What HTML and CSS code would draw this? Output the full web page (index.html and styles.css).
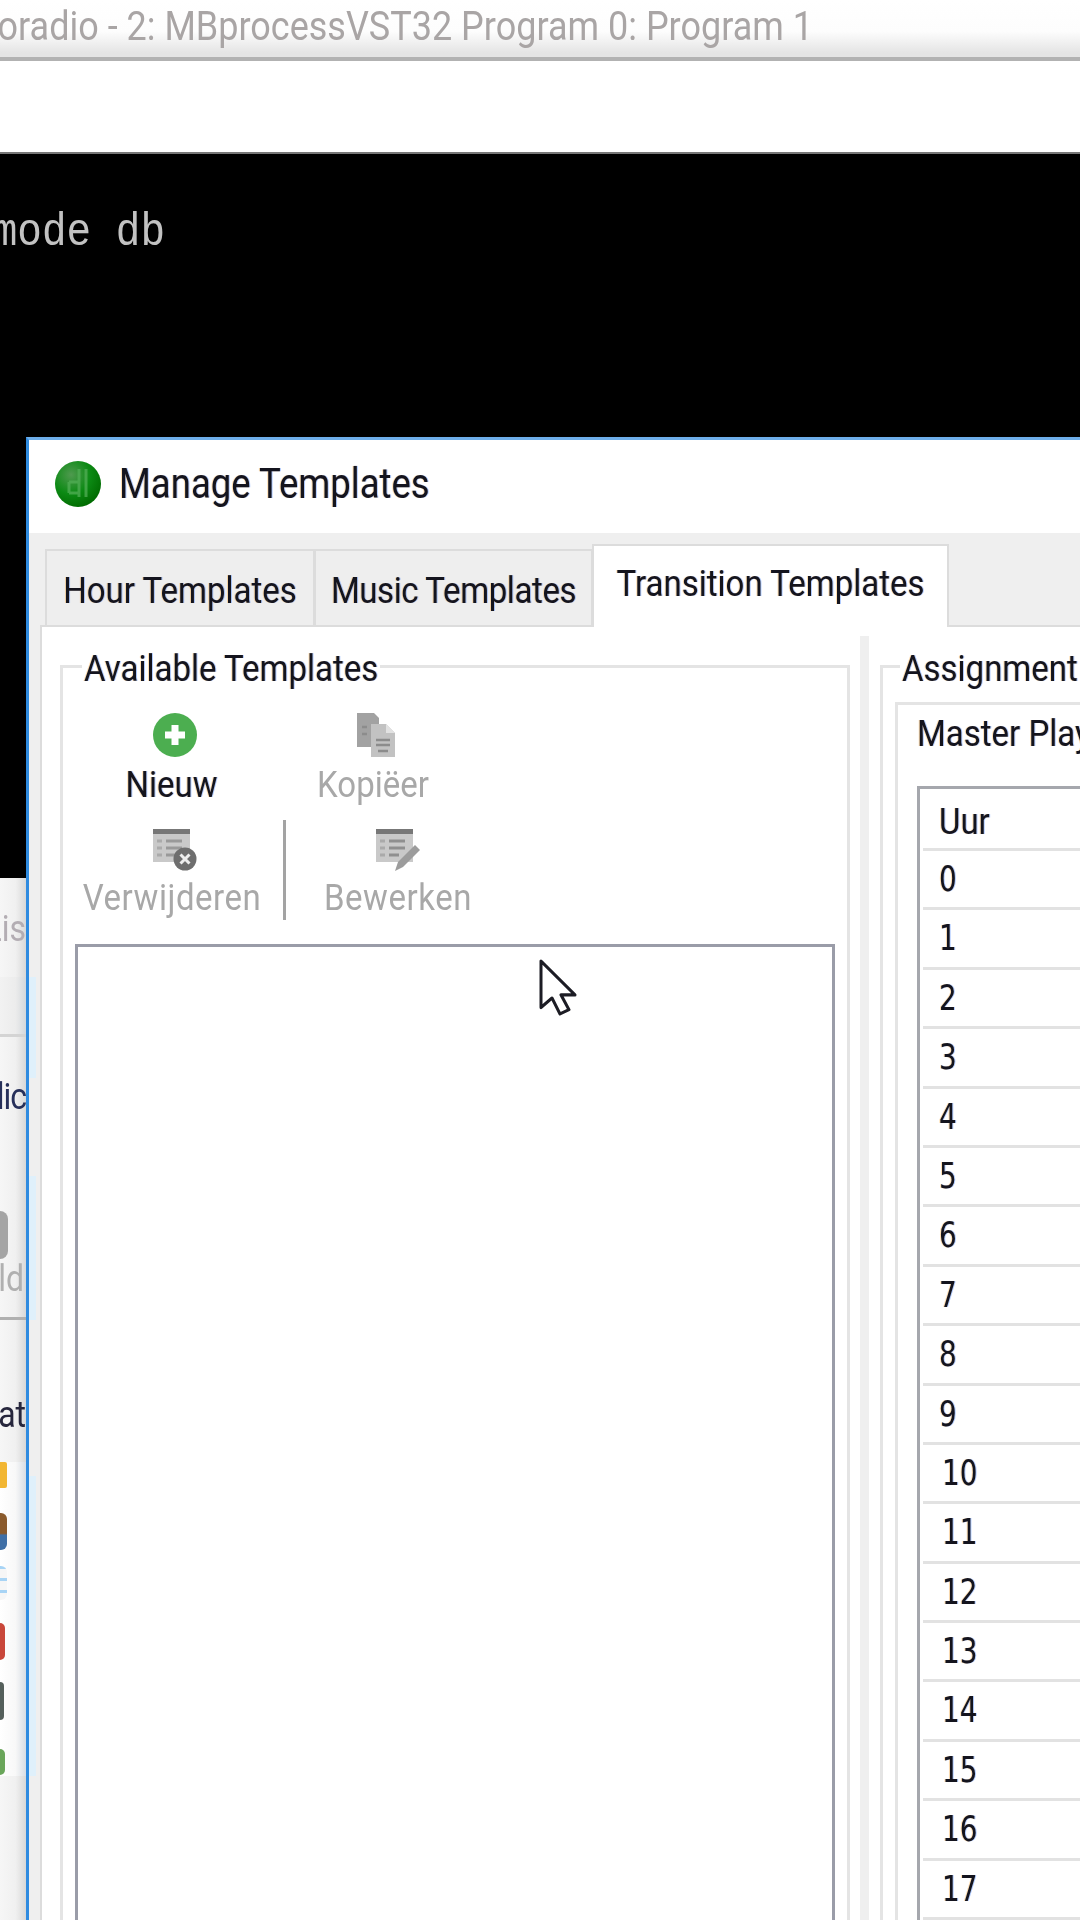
FILE: index.html
```html
<!DOCTYPE html>
<html lang="nl">
<head>
<meta charset="utf-8">
<title>Manage Templates</title>
<link rel="stylesheet" href="styles.css">
</head>
<body>
<div class="screen">
  <header class="apptitle"><span class="tx apptitle-text">oradio - 2: MBprocessVST32 Program 0: Program 1</span></header>
  <div class="menuband"></div>
  <main class="console">
    <div class="console-line"><span class="tx">mode db</span></div>
  </main>

  <aside class="backwin">
    <div class="bw-row bw-lis"><span class="tx">Lis</span></div>
    <div class="bw-logo"></div>
    <div class="bw-row bw-lic"><span class="tx">lic</span></div>
    <div class="bw-tool">
      <div class="bw-blob"></div>
      <div class="bw-ld"><span class="tx">ld</span></div>
    </div>
    <div class="bw-row bw-at"><span class="tx">at</span></div>
    <div class="bw-icons">
      <i class="bi yellow"></i>
      <i class="bi brown"></i>
      <i class="bi lines"></i>
      <i class="bi red"></i>
      <i class="bi dark"></i>
      <i class="bi green"></i>
    </div>
  </aside>

  <section class="dialog">
    <div class="edge">
      <i class="e2"></i><i class="e3"></i><i class="e4"></i>
    </div>
    <div class="dlg-title">
      <svg class="app-icon" viewBox="0 0 46 46">
        <defs>
          <radialGradient id="ball" cx="35%" cy="30%" r="75%">
            <stop offset="0" stop-color="#4f9a4f"/>
            <stop offset=".55" stop-color="#0c8a14"/>
            <stop offset="1" stop-color="#006a00"/>
          </radialGradient>
        </defs>
        <circle cx="23" cy="23" r="23" fill="url(#ball)"/>
        <path d="M31 8v28M24 8v28M14 21h10M14 32h10M14 21v11" fill="none" stroke="#52ad55" stroke-width="3" opacity=".75"/>
      </svg>
      <span class="tx dlg-title-text">Manage Templates</span>
    </div>

    <nav class="tabs">
      <div class="tab tab-hour"><span class="tx">Hour Templates</span></div>
      <div class="tab tab-music"><span class="tx">Music Templates</span></div>
      <div class="tab tab-active"><span class="tx">Transition Templates</span></div>
    </nav>

    <div class="panel">
      <section class="group group-left">
        <div class="legend"><span class="tx">Available Templates</span></div>
        <div class="toolbar">
          <div class="tool tool-new">
            <svg class="ic" viewBox="0 0 44 44"><circle cx="22" cy="22" r="22" fill="#4cae50"/><path d="M22 12v20M12 22h20" stroke="#fff" stroke-width="7"/></svg>
            <span class="tx lbl">Nieuw</span>
          </div>
          <div class="tool tool-copy off">
            <svg class="ic" viewBox="0 0 38 44"><path d="M0 0h17l5 5v29H0z" fill="#a2a2a2"/><path d="M14 11h15l9 9v24H14z" fill="#c2c2c2"/><path d="M29 11l9 9h-9z" fill="#e2e2e2"/><path d="M19 27h14M19 32h14M21 38h10M5 14h5M5 21h5" stroke="#8c8c8c" stroke-width="2.5"/></svg>
            <span class="tx lbl">Kopiëer</span>
          </div>
          <div class="tool tool-del off">
            <svg class="ic" viewBox="0 0 44 42"><path d="M0 3h37v30H0z" fill="#c9c9c9"/><path d="M0 0h37v5H0z" fill="#777"/><path d="M13 12h16M13 19h16M13 26h10" stroke="#999" stroke-width="3"/><path d="M4 12h5M4 19h5M4 26h5" stroke="#aaa" stroke-width="3"/><circle cx="32" cy="30" r="11.500" fill="#6e6e6e"/><path d="M27.500 25.500l9 9M36.500 25.500l-9 9" stroke="#eee" stroke-width="3"/></svg>
            <span class="tx lbl">Verwijderen</span>
          </div>
          <div class="tool-sep"></div>
          <div class="tool tool-edit off">
            <svg class="ic" viewBox="0 0 44 42"><path d="M0 3h37v30H0z" fill="#c9c9c9"/><path d="M0 0h37v5H0z" fill="#777"/><path d="M13 12h16M13 19h16M13 26h10" stroke="#8f8f8f" stroke-width="3"/><path d="M4 12h5M4 19h5M4 26h5" stroke="#aaa" stroke-width="3"/><path d="M19 42l3-9 17-17 5 5-17 17z" fill="#9c9c9c"/></svg>
            <span class="tx lbl">Bewerken</span>
          </div>
        </div>
        <div class="listbox"></div>
      </section>

      <div class="splitter"></div>

      <section class="group group-right">
        <div class="legend"><span class="tx">Assignment</span></div>
        <div class="subpage">
          <div class="subtitle"><span class="tx">Master Play</span></div>
          <div class="hours">
            <div class="hr hr-head"><span class="tx">Uur</span></div>
            <div class="hr"><span class="tx num">0</span></div>
            <div class="hr"><span class="tx num">1</span></div>
            <div class="hr"><span class="tx num">2</span></div>
            <div class="hr"><span class="tx num">3</span></div>
            <div class="hr"><span class="tx num">4</span></div>
            <div class="hr"><span class="tx num">5</span></div>
            <div class="hr"><span class="tx num">6</span></div>
            <div class="hr"><span class="tx num">7</span></div>
            <div class="hr"><span class="tx num">8</span></div>
            <div class="hr"><span class="tx num">9</span></div>
            <div class="hr two"><span class="tx num">10</span></div>
            <div class="hr two"><span class="tx num">11</span></div>
            <div class="hr two"><span class="tx num">12</span></div>
            <div class="hr two"><span class="tx num">13</span></div>
            <div class="hr two"><span class="tx num">14</span></div>
            <div class="hr two"><span class="tx num">15</span></div>
            <div class="hr two"><span class="tx num">16</span></div>
            <div class="hr two"><span class="tx num">17</span></div>
          </div>
        </div>
      </section>
    </div>
  </section>

  <svg class="cursor" viewBox="0 0 38 54" preserveAspectRatio="none"><path d="M2 2v44l11-9 8 15 9-4-8-14h14z" fill="#fff" stroke="#1c1c24" stroke-width="3" stroke-linejoin="round"/></svg>
</div>
</body>
</html>
```

FILE: styles.css
```css
* { box-sizing: border-box; }
html, body { margin: 0; padding: 0; }
body { background: #fff; font-family: Roboto, "Noto Sans", sans-serif; }

.screen {
  position: relative;
  width: 1080px;
  height: 1920px;
  overflow: hidden;
  display: flex;
  flex-direction: column;
  background: #fff;
  filter: blur(0.7px);
}

.tx { display: inline-block; transform: scaleY(1.14); white-space: nowrap; }

.apptitle {
  flex: none;
  height: 61px;
  width: 100%;
  padding: 0 267px 6px 0;
  display: flex;
  justify-content: flex-end;
  align-items: center;
  font-size: 36px;
  line-height: 50px;
  color: #a9a5a5;
  white-space: nowrap;
  background: linear-gradient(#ffffff 0, #fdfdfd 55%, #e4e4e4 93%, #e4e4e4 94%);
  border-bottom: 4px solid #b2b2b2;
}
.menuband { flex: none; height: 93px; background: #fff; border-bottom: 2px solid #777; }

.console { flex: 1; background: #000; padding-top: 53px; }
.console-line {
  width: 165px;
  display: flex;
  justify-content: flex-end;
  font-family: "Liberation Mono", monospace;
  font-size: 41px;
  line-height: 50px;
  color: #c2c2c2;
  white-space: nowrap;
}

/* window partly hidden behind the dialog */
.backwin {
  position: absolute;
  left: 0;
  top: 878px;
  width: 26px;
  height: 1042px;
  overflow: hidden;
  display: flex;
  flex-direction: column;
  background: linear-gradient(90deg, #f6f6f6, #f0f0f0 60%, #d8d8d8);
  font-size: 32px;
}
.bw-row { flex: none; display: flex; justify-content: flex-end; white-space: nowrap; }
.bw-lis { height: 99px; padding-top: 30px; line-height: 44px; color: #b3adb3; }
.bw-logo {
  flex: none;
  height: 60px;
  background: linear-gradient(90deg, #f2f2f2, #ececec 60%, #d4d8dc);
  border-bottom: 3px solid #d4d4d4;
}
.bw-lic { height: 140px; padding-top: 43px; line-height: 40px; color: #27305a; letter-spacing: -1px; }
.bw-tool {
  flex: none;
  height: 143px;
  padding-top: 34px;
  border-bottom: 3px solid #b0b0b0;
}
.bw-blob { width: 8px; height: 48px; background: #a4a4a4; border-radius: 0 8px 8px 0; }
.bw-ld { display: flex; justify-content: flex-end; width: 24px; margin-top: 2px; line-height: 34px; color: #b0b0b0; overflow: hidden; }
.bw-at { height: 142px; padding-top: 82px; line-height: 30px; color: #26263c; }
.bw-icons {
  flex: none;
  display: flex;
  flex-direction: column;
  background: linear-gradient(90deg, #fff, #f8f8f8 60%, #d8dde4);
  height: 314px;
}
.bi { display: block; flex: none; width: 7px; border-radius: 0 6px 6px 0; }
.yellow { height: 26px; background: #f2b632; margin-bottom: 25px; border-radius: 0 2px 2px 0; }
.brown { height: 37px; background: linear-gradient(#8a5a2c 55%, #3f6fa6 60%); margin-bottom: 16px; }
.lines { height: 34px; background: repeating-linear-gradient(#a8d4f5 0 3px, #f6f6f6 3px 12px); margin-bottom: 23px; }
.red { height: 37px; width: 5px; background: #c9473a; margin-bottom: 22px; }
.dark { height: 38px; width: 4px; background: #55605c; margin-bottom: 29px; }
.green { height: 26px; width: 5px; background: #6aa65a; }

/* dialog */
.dialog {
  position: absolute;
  left: 26px;
  top: 437px;
  width: 1054px;
  height: 1483px;
  overflow: hidden;
  display: flex;
  flex-direction: column;
  background: #efefef;
  border-left: 3px solid #2f8be0;
  border-top: 3px solid #6eaeea;
  color: #14141e;
  font-size: 33px;
  text-shadow: -1px 0 rgba(255, 150, 0, .3), 1px 0 rgba(0, 90, 255, .3);
}
.edge {
  position: absolute;
  left: -3px;
  top: 537px;
  width: 10px;
  display: flex;
  flex-direction: column;
}
.edge i { display: block; flex: none; }
.e2 { height: 101px; background: linear-gradient(90deg, #7d8a96 0 3px, #dff0fb 3px); margin-bottom: 98px; }
.e3 { height: 144px; background: linear-gradient(90deg, #7d8a96 0 3px, #dff0fb 3px); margin-bottom: 156px; }
.e4 { height: 300px; background: linear-gradient(90deg, transparent 0 3px, #dff0fb 3px); }
.dlg-title {
  flex: none;
  height: 93px;
  padding-left: 26px;
  background: #fff;
  display: flex;
  align-items: center;
  gap: 18px;
  font-size: 36.500px;
}
.app-icon { width: 46px; height: 46px; flex: none; margin-top: -6px; }
.dlg-title-text { margin-top: -6px; }

.tabs {
  flex: none;
  height: 92px;
  padding-left: 16px;
  display: flex;
  align-items: flex-end;
}
.tab {
  height: 76px;
  border: 2px solid #dcdcdc;
  border-bottom: 0;
  display: flex;
  align-items: center;
  justify-content: center;
  margin-right: -1px;
  background: #eeeeee;
  padding-top: 2px;
}
.tab-hour { width: 270px; }
.tab-music { width: 279px; letter-spacing: -.4px; }
.tab-active {
  width: 357px;
  height: 83px;
  background: #fff;
  padding-top: 0;
  margin-bottom: -2px;
  position: relative;
  padding-bottom: 8px;
}
.panel {
  flex: 1;
  margin-left: 11px;
  min-height: 0;
  background: #fff;
  border-top: 2px solid #dcdcdc;
  border-left: 2px solid #dcdcdc;
  padding: 38px 0 0 18px;
  display: flex;
}
.group {
  flex: none;
  border: 3px solid #e4e4e4;
  border-bottom: 0;
}
.group-left { width: 790px; height: 1300px; }
.group-right { width: 260px; height: 1300px; border-right: 0; }
.legend {
  height: 36px;
  margin-top: -24px;
  margin-left: 19px;
  line-height: 48px;
  width: max-content;
  background: #fff;
  padding: 0 2px;
}
.group-right .legend { margin-left: 17px; }
.splitter { flex: none; width: 9px; margin: -29px 11px 0 10px; background: #efefef; }

.toolbar {
  position: relative;
  height: 264px;
}
.tool {
  position: absolute;
  display: flex;
  flex-direction: column;
  align-items: center;
  width: 200px;
}
.ic { display: block; flex: none; width: 44px; height: 44px; }
.tool-new { left: 12px; top: 33px; }
.tool-copy { left: 210px; top: 33px; }
.tool-del { left: 12px; top: 148px; }
.tool-edit { left: 235px; top: 148px; }
.tool-sep { position: absolute; left: 220px; top: 140px; width: 3px; height: 100px; background: #a3a3a3; }
.tool-copy .ic { width: 38px; margin-left: 6px; }
.lbl { margin-top: 7px; line-height: 40px; }
.tool-new .lbl { margin-right: 7px; }
.tool-del .lbl { margin: 5px 6px 0 0; letter-spacing: .55px; }
.tool-edit .lbl { margin-top: 5px; letter-spacing: .55px; }
.off { color: #a8a8a8; text-shadow: none; }

.listbox {
  margin: 0 12px;
  height: 1100px;
  background: #fff;
  border: 3px solid #9a9ca8;
  border-bottom: 0;
}

.subpage {
  margin: 22px 0 0 12px;
  padding: 10px 0 0 19px;
  border: 3px solid #e4e4e4;
  border-right: 0;
  border-bottom: 0;
  height: 1300px;
}
.subtitle { height: 71px; line-height: 36px; }
.hours {
  border: 3px solid #a5a7ad;
  border-right: 0;
  border-bottom: 0;
  padding-left: 3px;
  height: 1300px;
}
.hr {
  height: 59.4px;
  border-bottom: 3px solid #e2e2e2;
  padding-left: 16px;
  line-height: 54px;
}
.hr-head { height: 62px; line-height: 64px; }
.two { padding-left: 19px; }
.num { font-family: "DejaVu Sans Condensed", "DejaVu Sans", sans-serif; font-size: 31px; transform: scaleY(1.14); }

.cursor {
  position: absolute;
  left: 539px;
  top: 959px;
  width: 38px;
  height: 57px;
}
```
